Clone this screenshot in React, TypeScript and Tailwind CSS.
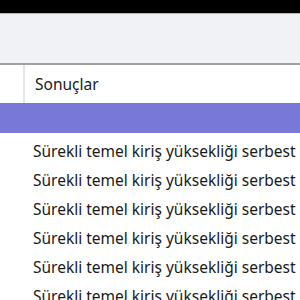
export default function App() {
  const rows = Array.from({ length: 6 });
  return (
    <div className="w-[300px] h-[300px] overflow-hidden bg-white" style={{ fontFamily: '"Noto Sans", "Open Sans", sans-serif' }}>
      <div className="h-[13px] bg-black" />
      <div className="h-[1px] bg-[#b4b6b8]" />
      <div className="h-[49px] bg-[#f0f2f5]" />
      <div className="h-[2px] bg-[#a0a0a0]" />
      <div className="flex h-[38px]">
        <div className="w-[25px] shrink-0 border-r-2 border-[#e6e6e6]" />
        <div className="pl-[10px] pt-[10px] text-[15.5px] leading-[18px] text-[#1a1a1a] whitespace-nowrap">Sonuçlar</div>
      </div>
      <div className="h-[30px] bg-[#7878d8]" />
      {rows.map((_, i) => (
        <div key={i} className="h-[29px] pl-[33px] pt-[9px] text-[15.5px] leading-[18px] text-[#1a1a1a] whitespace-nowrap">
          Sürekli temel kiriş yüksekliği serbest
        </div>
      ))}
    </div>
  );
}
